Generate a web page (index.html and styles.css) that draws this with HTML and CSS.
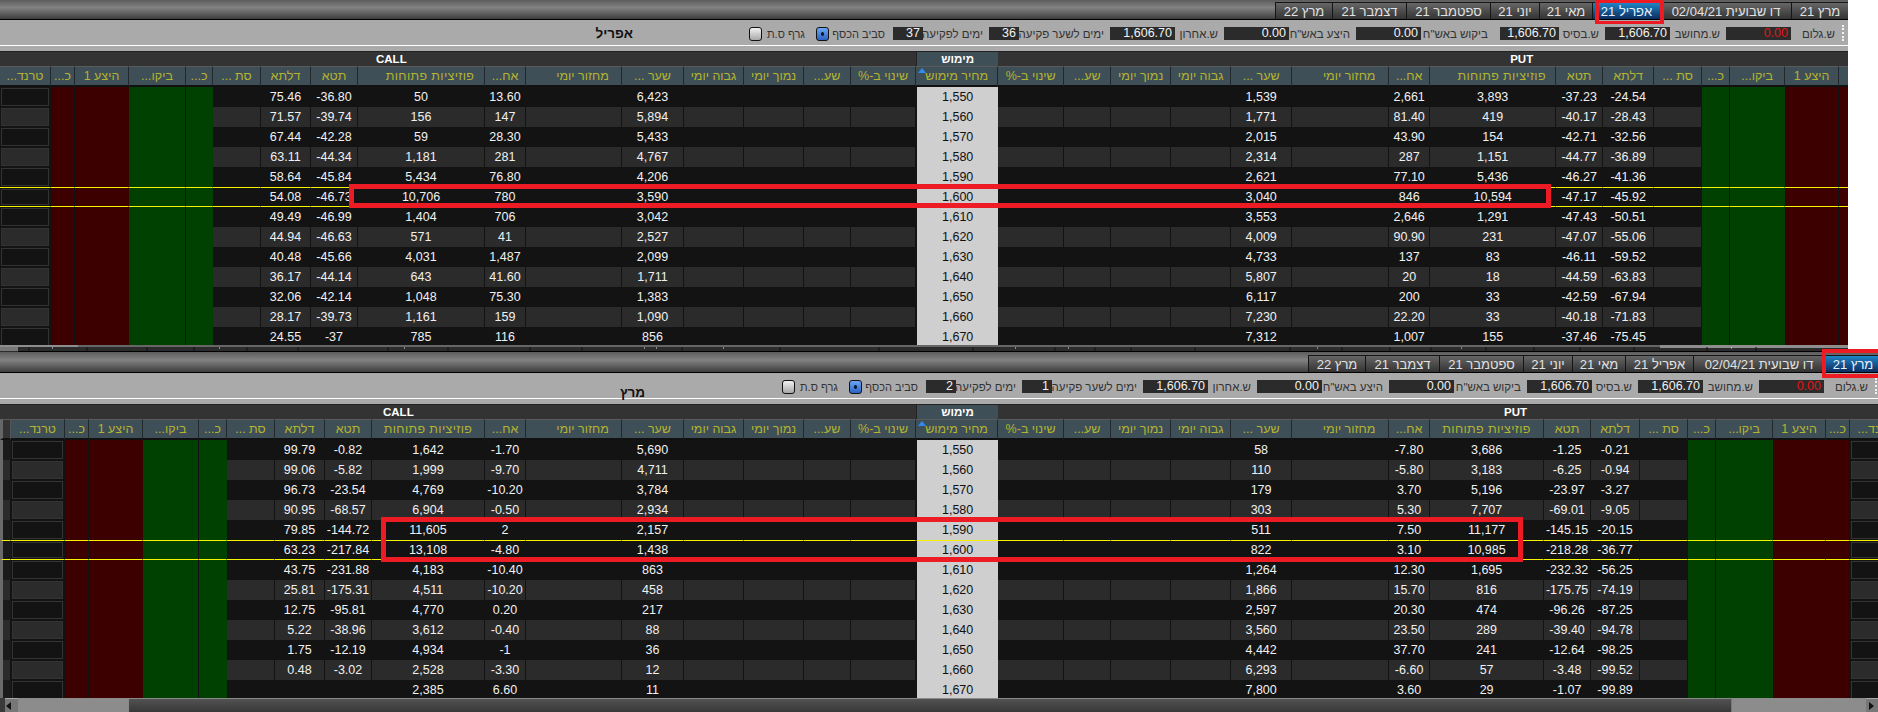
FILE: index.html
```html
<!DOCTYPE html>
<html lang="he">
<head>
<meta charset="utf-8">
<title>מסך אופציות</title>
<link rel="stylesheet" href="styles.css">
</head>
<body>
<div class="page">

<section class="panel panel-a">
  <nav class="bar">
    <span class="tab t57">מרץ 21</span><span class="tab t131">דו שבועית 02/04/21</span><span class="tab t68 active">אפריל 21</span><span class="tab t53">מאי 21</span><span class="tab t49">יוני 21</span><span class="tab t84">ספטמבר 21</span><span class="tab t74">דצמבר 21</span><span class="tab t57">מרץ 22</span>
  </nav>
  <div class="toolbar">
    <div class="tools">
      <i class="grip"></i>
      <div class="field f-gross"><label>ש.גלום</label><output class="neg">0.00</output></div>
      <div class="field f-calc"><label>ש.מחושב</label><output>1,606.70</output></div>
      <div class="field f-base"><label>ש.בסיס</label><output>1,606.70</output></div>
      <div class="field f-bid"><label>ביקוש באש"ח</label><output>0.00</output></div>
      <div class="field f-ask"><label>היצע באש"ח</label><output>0.00</output></div>
      <div class="field f-last"><label>ש.אחרון</label><output>1,606.70</output></div>
      <div class="field f-exd"><label>ימים לשער פקיעה</label><output class="short">36</output></div>
      <div class="field f-days"><label>ימים לפקיעה</label><output class="short">37</output></div>
      <div class="check c-money"><label>סביב הכסף</label><i class="box on"></i></div>
      <div class="check c-graph"><label>גרף ס.ת</label><i class="box"></i></div>
      <h2 class="title">אפריל</h2>
    </div>
  </div>
  <div class="grid">
    <table>
      <colgroup><col class="w51"><col class="w24"><col class="w54"><col class="w57"><col class="w27"><col class="w48"><col class="w50"><col class="w47"><col class="w127"><col class="w41"><col class="w96"><col class="w62"><col class="w60"><col class="w60"><col class="w47"><col class="w65"><col class="w82"><col class="w66"><col class="w47"><col class="w60"><col class="w60"><col class="w61"><col class="w97"><col class="w41"><col class="w126"><col class="w47"><col class="w51"><col class="w48"><col class="w28"><col class="w55"><col class="w54"><col class="w54"></colgroup>
      <thead>
        <tr class="groups"><th colspan="16" class="call">CALL</th><th class="exercise">מימוש</th><th colspan="15" class="put">PUT</th></tr>
        <tr class="heads"><th>טרנד...</th><th>כ...</th><th>היצע 1</th><th>ביקו...</th><th>כ...</th><th>סת ...</th><th>דלתא</th><th>תטא</th><th class="off wide">פוזיציות פתוחות</th><th>אח...</th><th class="off">מחזור יומי</th><th>שער ...</th><th>גבוה יומי</th><th>נמוך יומי</th><th>שע...</th><th>שינוי ב-%</th><th class="sorted">מחיר מימוש</th><th>שינוי ב-%</th><th>שע...</th><th>נמוך יומי</th><th>גבוה יומי</th><th>שער ...</th><th class="off">מחזור יומי</th><th>אח...</th><th class="off wide">פוזיציות פתוחות</th><th>תטא</th><th>דלתא</th><th>סת ...</th><th>כ...</th><th>ביקו...</th><th>היצע 1</th><th>כ...</th></tr>
      </thead>
      <tbody>
        <tr><td class="trend"></td><td class="r sep"></td><td class="r"></td><td class="g sep"></td><td class="g"></td><td></td><td>75.46</td><td>-36.80</td><td>50</td><td>13.60</td><td></td><td>6,423</td><td></td><td></td><td></td><td></td><td class="strike">1,550</td><td></td><td></td><td></td><td></td><td>1,539</td><td></td><td>2,661</td><td>3,893</td><td>-37.23</td><td>-24.54</td><td></td><td class="g sep"></td><td class="g"></td><td class="r sep"></td><td class="r"></td></tr>
        <tr class="alt"><td class="trend"></td><td class="r sep"></td><td class="r"></td><td class="g sep"></td><td class="g"></td><td></td><td>71.57</td><td>-39.74</td><td>156</td><td>147</td><td></td><td>5,894</td><td></td><td></td><td></td><td></td><td class="strike">1,560</td><td></td><td></td><td></td><td></td><td>1,771</td><td></td><td>81.40</td><td>419</td><td>-40.17</td><td>-28.43</td><td></td><td class="g sep"></td><td class="g"></td><td class="r sep"></td><td class="r"></td></tr>
        <tr><td class="trend"></td><td class="r sep"></td><td class="r"></td><td class="g sep"></td><td class="g"></td><td></td><td>67.44</td><td>-42.28</td><td>59</td><td>28.30</td><td></td><td>5,433</td><td></td><td></td><td></td><td></td><td class="strike">1,570</td><td></td><td></td><td></td><td></td><td>2,015</td><td></td><td>43.90</td><td>154</td><td>-42.71</td><td>-32.56</td><td></td><td class="g sep"></td><td class="g"></td><td class="r sep"></td><td class="r"></td></tr>
        <tr class="alt"><td class="trend"></td><td class="r sep"></td><td class="r"></td><td class="g sep"></td><td class="g"></td><td></td><td>63.11</td><td>-44.34</td><td>1,181</td><td>281</td><td></td><td>4,767</td><td></td><td></td><td></td><td></td><td class="strike">1,580</td><td></td><td></td><td></td><td></td><td>2,314</td><td></td><td>287</td><td>1,151</td><td>-44.77</td><td>-36.89</td><td></td><td class="g sep"></td><td class="g"></td><td class="r sep"></td><td class="r"></td></tr>
        <tr><td class="trend"></td><td class="r sep"></td><td class="r"></td><td class="g sep"></td><td class="g"></td><td></td><td>58.64</td><td>-45.84</td><td>5,434</td><td>76.80</td><td></td><td>4,206</td><td></td><td></td><td></td><td></td><td class="strike">1,590</td><td></td><td></td><td></td><td></td><td>2,621</td><td></td><td>77.10</td><td>5,436</td><td>-46.27</td><td>-41.36</td><td></td><td class="g sep"></td><td class="g"></td><td class="r sep"></td><td class="r"></td></tr>
        <tr class="atm"><td class="trend"></td><td class="r sep"></td><td class="r"></td><td class="g sep"></td><td class="g"></td><td></td><td>54.08</td><td>-46.73</td><td>10,706</td><td>780</td><td></td><td>3,590</td><td></td><td></td><td></td><td></td><td class="strike">1,600</td><td></td><td></td><td></td><td></td><td>3,040</td><td></td><td>846</td><td>10,594</td><td>-47.17</td><td>-45.92</td><td></td><td class="g sep"></td><td class="g"></td><td class="r sep"></td><td class="r"></td></tr>
        <tr><td class="trend"></td><td class="r sep"></td><td class="r"></td><td class="g sep"></td><td class="g"></td><td></td><td>49.49</td><td>-46.99</td><td>1,404</td><td>706</td><td></td><td>3,042</td><td></td><td></td><td></td><td></td><td class="strike">1,610</td><td></td><td></td><td></td><td></td><td>3,553</td><td></td><td>2,646</td><td>1,291</td><td>-47.43</td><td>-50.51</td><td></td><td class="g sep"></td><td class="g"></td><td class="r sep"></td><td class="r"></td></tr>
        <tr class="alt"><td class="trend"></td><td class="r sep"></td><td class="r"></td><td class="g sep"></td><td class="g"></td><td></td><td>44.94</td><td>-46.63</td><td>571</td><td>41</td><td></td><td>2,527</td><td></td><td></td><td></td><td></td><td class="strike">1,620</td><td></td><td></td><td></td><td></td><td>4,009</td><td></td><td>90.90</td><td>231</td><td>-47.07</td><td>-55.06</td><td></td><td class="g sep"></td><td class="g"></td><td class="r sep"></td><td class="r"></td></tr>
        <tr><td class="trend"></td><td class="r sep"></td><td class="r"></td><td class="g sep"></td><td class="g"></td><td></td><td>40.48</td><td>-45.66</td><td>4,031</td><td>1,487</td><td></td><td>2,099</td><td></td><td></td><td></td><td></td><td class="strike">1,630</td><td></td><td></td><td></td><td></td><td>4,733</td><td></td><td>137</td><td>83</td><td>-46.11</td><td>-59.52</td><td></td><td class="g sep"></td><td class="g"></td><td class="r sep"></td><td class="r"></td></tr>
        <tr class="alt"><td class="trend"></td><td class="r sep"></td><td class="r"></td><td class="g sep"></td><td class="g"></td><td></td><td>36.17</td><td>-44.14</td><td>643</td><td>41.60</td><td></td><td>1,711</td><td></td><td></td><td></td><td></td><td class="strike">1,640</td><td></td><td></td><td></td><td></td><td>5,807</td><td></td><td>20</td><td>18</td><td>-44.59</td><td>-63.83</td><td></td><td class="g sep"></td><td class="g"></td><td class="r sep"></td><td class="r"></td></tr>
        <tr><td class="trend"></td><td class="r sep"></td><td class="r"></td><td class="g sep"></td><td class="g"></td><td></td><td>32.06</td><td>-42.14</td><td>1,048</td><td>75.30</td><td></td><td>1,383</td><td></td><td></td><td></td><td></td><td class="strike">1,650</td><td></td><td></td><td></td><td></td><td>6,117</td><td></td><td>200</td><td>33</td><td>-42.59</td><td>-67.94</td><td></td><td class="g sep"></td><td class="g"></td><td class="r sep"></td><td class="r"></td></tr>
        <tr class="alt"><td class="trend"></td><td class="r sep"></td><td class="r"></td><td class="g sep"></td><td class="g"></td><td></td><td>28.17</td><td>-39.73</td><td>1,161</td><td>159</td><td></td><td>1,090</td><td></td><td></td><td></td><td></td><td class="strike">1,660</td><td></td><td></td><td></td><td></td><td>7,230</td><td></td><td>22.20</td><td>33</td><td>-40.18</td><td>-71.83</td><td></td><td class="g sep"></td><td class="g"></td><td class="r sep"></td><td class="r"></td></tr>
        <tr><td class="trend"></td><td class="r sep"></td><td class="r"></td><td class="g sep"></td><td class="g"></td><td></td><td>24.55</td><td>-37</td><td>785</td><td>116</td><td></td><td>856</td><td></td><td></td><td></td><td></td><td class="strike">1,670</td><td></td><td></td><td></td><td></td><td>7,312</td><td></td><td>1,007</td><td>155</td><td>-37.46</td><td>-75.45</td><td></td><td class="g sep"></td><td class="g"></td><td class="r sep"></td><td class="r"></td></tr>
      </tbody>
    </table>
  </div>
  <svg class="ruler" width="1848" height="7" viewBox="0 0 1848 7" aria-hidden="true">
    <rect width="1848" height="7" fill="#2c2c2c"/>
    <rect x="78" width="1582" height="2" fill="#666"/>
    <rect width="78" height="2" fill="#8e8e8e"/>
    <rect x="1660" width="188" height="3" fill="#8e8e8e"/>
    <rect y="2" width="18" height="4" fill="#777"/>
    <rect y="6" x="18" width="1830" height="1" fill="#000"/>
    <path d="M29 2v4M87 2v4M147 2v4M194 2v4M247 2v4M298 2v4M388 2v4M448 2v4M530 2v4M582 2v4M682 2v4M780 2v4M879 2v4M973 2v4M1055 2v4M1095 2v4M1131 2v4M1195 2v4M1290 2v4M1342 2v4M1390 2v4M1431 2v4M1486 2v4M1534 2v4M1580 2v4M1634 2v4M1707 2v4M1756 2v4" stroke="#111"/>
    <path d="M52 3h1M219 3h1M404 3h1M644 3h1M656 3h1M723 3h1M1015 3h1M1068 3h1M1317 3h1M1461 3h1M1731 3h1" stroke="#dfe6ff"/>
  </svg>
</section>

<section class="panel panel-b">
  <nav class="bar">
    <span class="tab t57 active">מרץ 21</span><span class="tab t131">דו שבועית 02/04/21</span><span class="tab t68">אפריל 21</span><span class="tab t53">מאי 21</span><span class="tab t49">יוני 21</span><span class="tab t84">ספטמבר 21</span><span class="tab t74">דצמבר 21</span><span class="tab t57">מרץ 22</span>
  </nav>
  <div class="toolbar">
    <div class="tools">
      <i class="grip"></i>
      <div class="field f-gross"><label>ש.גלום</label><output class="neg">0.00</output></div>
      <div class="field f-calc"><label>ש.מחושב</label><output>1,606.70</output></div>
      <div class="field f-base"><label>ש.בסיס</label><output>1,606.70</output></div>
      <div class="field f-bid"><label>ביקוש באש"ח</label><output>0.00</output></div>
      <div class="field f-ask"><label>היצע באש"ח</label><output>0.00</output></div>
      <div class="field f-last"><label>ש.אחרון</label><output>1,606.70</output></div>
      <div class="field f-exd"><label>ימים לשער פקיעה</label><output class="short">1</output></div>
      <div class="field f-days"><label>ימים לפקיעה</label><output class="short">2</output></div>
      <div class="check c-money"><label>סביב הכסף</label><i class="box on"></i></div>
      <div class="check c-graph"><label>גרף ס.ת</label><i class="box"></i></div>
      <h2 class="title">מרץ</h2>
    </div>
  </div>
  <div class="grid">
    <table>
      <colgroup><col class="w11"><col class="w54"><col class="w24"><col class="w54"><col class="w56"><col class="w28"><col class="w48"><col class="w50"><col class="w47"><col class="w113"><col class="w41"><col class="w96"><col class="w62"><col class="w60"><col class="w60"><col class="w47"><col class="w65"><col class="w82"><col class="w66"><col class="w47"><col class="w60"><col class="w60"><col class="w61"><col class="w97"><col class="w41"><col class="w114"><col class="w47"><col class="w49"><col class="w48"><col class="w28"><col class="w57"><col class="w53"><col class="w24"><col class="w53"></colgroup>
      <thead>
        <tr class="groups"><th colspan="17" class="call">CALL</th><th class="exercise">מימוש</th><th colspan="16" class="put">PUT</th></tr>
        <tr class="heads"><th class="gutter"></th><th>טרנד...</th><th>כ...</th><th>היצע 1</th><th>ביקו...</th><th>כ...</th><th>סת ...</th><th>דלתא</th><th>תטא</th><th class="wide">פוזיציות פתוחות</th><th>אח...</th><th class="off">מחזור יומי</th><th>שער ...</th><th>גבוה יומי</th><th>נמוך יומי</th><th>שע...</th><th>שינוי ב-%</th><th class="sorted">מחיר מימוש</th><th>שינוי ב-%</th><th>שע...</th><th>נמוך יומי</th><th>גבוה יומי</th><th>שער ...</th><th class="off">מחזור יומי</th><th>אח...</th><th class="wide">פוזיציות פתוחות</th><th>תטא</th><th>דלתא</th><th>סת ...</th><th>כ...</th><th>ביקו...</th><th>היצע 1</th><th>כ...</th><th>טרנד...</th></tr>
      </thead>
      <tbody>
        <tr><td class="gutter"></td><td class="trend"></td><td class="r sep"></td><td class="r"></td><td class="g sep"></td><td class="g"></td><td></td><td>99.79</td><td>-0.82</td><td>1,642</td><td>-1.70</td><td></td><td>5,690</td><td></td><td></td><td></td><td></td><td class="strike">1,550</td><td></td><td></td><td></td><td></td><td>58</td><td></td><td>-7.80</td><td>3,686</td><td>-1.25</td><td>-0.21</td><td></td><td class="g sep"></td><td class="g"></td><td class="r sep"></td><td class="r"></td><td class="trend"></td></tr>
        <tr class="alt"><td class="gutter"></td><td class="trend"></td><td class="r sep"></td><td class="r"></td><td class="g sep"></td><td class="g"></td><td></td><td>99.06</td><td>-5.82</td><td>1,999</td><td>-9.70</td><td></td><td>4,711</td><td></td><td></td><td></td><td></td><td class="strike">1,560</td><td></td><td></td><td></td><td></td><td>110</td><td></td><td>-5.80</td><td>3,183</td><td>-6.25</td><td>-0.94</td><td></td><td class="g sep"></td><td class="g"></td><td class="r sep"></td><td class="r"></td><td class="trend"></td></tr>
        <tr><td class="gutter"></td><td class="trend"></td><td class="r sep"></td><td class="r"></td><td class="g sep"></td><td class="g"></td><td></td><td>96.73</td><td>-23.54</td><td>4,769</td><td>-10.20</td><td></td><td>3,784</td><td></td><td></td><td></td><td></td><td class="strike">1,570</td><td></td><td></td><td></td><td></td><td>179</td><td></td><td>3.70</td><td>5,196</td><td>-23.97</td><td>-3.27</td><td></td><td class="g sep"></td><td class="g"></td><td class="r sep"></td><td class="r"></td><td class="trend"></td></tr>
        <tr class="alt"><td class="gutter"></td><td class="trend"></td><td class="r sep"></td><td class="r"></td><td class="g sep"></td><td class="g"></td><td></td><td>90.95</td><td>-68.57</td><td>6,904</td><td>-0.50</td><td></td><td>2,934</td><td></td><td></td><td></td><td></td><td class="strike">1,580</td><td></td><td></td><td></td><td></td><td>303</td><td></td><td>5.30</td><td>7,707</td><td>-69.01</td><td>-9.05</td><td></td><td class="g sep"></td><td class="g"></td><td class="r sep"></td><td class="r"></td><td class="trend"></td></tr>
        <tr><td class="gutter"></td><td class="trend"></td><td class="r sep"></td><td class="r"></td><td class="g sep"></td><td class="g"></td><td></td><td>79.85</td><td>-144.72</td><td>11,605</td><td>2</td><td></td><td>2,157</td><td></td><td></td><td></td><td></td><td class="strike">1,590</td><td></td><td></td><td></td><td></td><td>511</td><td></td><td>7.50</td><td>11,177</td><td>-145.15</td><td>-20.15</td><td></td><td class="g sep"></td><td class="g"></td><td class="r sep"></td><td class="r"></td><td class="trend"></td></tr>
        <tr class="atm"><td class="gutter"></td><td class="trend"></td><td class="r sep"></td><td class="r"></td><td class="g sep"></td><td class="g"></td><td></td><td>63.23</td><td>-217.84</td><td>13,108</td><td>-4.80</td><td></td><td>1,438</td><td></td><td></td><td></td><td></td><td class="strike">1,600</td><td></td><td></td><td></td><td></td><td>822</td><td></td><td>3.10</td><td>10,985</td><td>-218.28</td><td>-36.77</td><td></td><td class="g sep"></td><td class="g"></td><td class="r sep"></td><td class="r"></td><td class="trend"></td></tr>
        <tr><td class="gutter"></td><td class="trend"></td><td class="r sep"></td><td class="r"></td><td class="g sep"></td><td class="g"></td><td></td><td>43.75</td><td>-231.88</td><td>4,183</td><td>-10.40</td><td></td><td>863</td><td></td><td></td><td></td><td></td><td class="strike">1,610</td><td></td><td></td><td></td><td></td><td>1,264</td><td></td><td>12.30</td><td>1,695</td><td>-232.32</td><td>-56.25</td><td></td><td class="g sep"></td><td class="g"></td><td class="r sep"></td><td class="r"></td><td class="trend"></td></tr>
        <tr class="alt"><td class="gutter"></td><td class="trend"></td><td class="r sep"></td><td class="r"></td><td class="g sep"></td><td class="g"></td><td></td><td>25.81</td><td>-175.31</td><td>4,511</td><td>-10.20</td><td></td><td>458</td><td></td><td></td><td></td><td></td><td class="strike">1,620</td><td></td><td></td><td></td><td></td><td>1,866</td><td></td><td>15.70</td><td>816</td><td>-175.75</td><td>-74.19</td><td></td><td class="g sep"></td><td class="g"></td><td class="r sep"></td><td class="r"></td><td class="trend"></td></tr>
        <tr><td class="gutter"></td><td class="trend"></td><td class="r sep"></td><td class="r"></td><td class="g sep"></td><td class="g"></td><td></td><td>12.75</td><td>-95.81</td><td>4,770</td><td>0.20</td><td></td><td>217</td><td></td><td></td><td></td><td></td><td class="strike">1,630</td><td></td><td></td><td></td><td></td><td>2,597</td><td></td><td>20.30</td><td>474</td><td>-96.26</td><td>-87.25</td><td></td><td class="g sep"></td><td class="g"></td><td class="r sep"></td><td class="r"></td><td class="trend"></td></tr>
        <tr class="alt"><td class="gutter"></td><td class="trend"></td><td class="r sep"></td><td class="r"></td><td class="g sep"></td><td class="g"></td><td></td><td>5.22</td><td>-38.96</td><td>3,612</td><td>-0.40</td><td></td><td>88</td><td></td><td></td><td></td><td></td><td class="strike">1,640</td><td></td><td></td><td></td><td></td><td>3,560</td><td></td><td>23.50</td><td>289</td><td>-39.40</td><td>-94.78</td><td></td><td class="g sep"></td><td class="g"></td><td class="r sep"></td><td class="r"></td><td class="trend"></td></tr>
        <tr><td class="gutter"></td><td class="trend"></td><td class="r sep"></td><td class="r"></td><td class="g sep"></td><td class="g"></td><td></td><td>1.75</td><td>-12.19</td><td>4,934</td><td>-1</td><td></td><td>36</td><td></td><td></td><td></td><td></td><td class="strike">1,650</td><td></td><td></td><td></td><td></td><td>4,442</td><td></td><td>37.70</td><td>241</td><td>-12.64</td><td>-98.25</td><td></td><td class="g sep"></td><td class="g"></td><td class="r sep"></td><td class="r"></td><td class="trend"></td></tr>
        <tr class="alt"><td class="gutter"></td><td class="trend"></td><td class="r sep"></td><td class="r"></td><td class="g sep"></td><td class="g"></td><td></td><td>0.48</td><td>-3.02</td><td>2,528</td><td>-3.30</td><td></td><td>12</td><td></td><td></td><td></td><td></td><td class="strike">1,660</td><td></td><td></td><td></td><td></td><td>6,293</td><td></td><td>-6.60</td><td>57</td><td>-3.48</td><td>-99.52</td><td></td><td class="g sep"></td><td class="g"></td><td class="r sep"></td><td class="r"></td><td class="trend"></td></tr>
        <tr><td class="gutter"></td><td class="trend"></td><td class="r sep"></td><td class="r"></td><td class="g sep"></td><td class="g"></td><td></td><td></td><td></td><td>2,385</td><td>6.60</td><td></td><td>11</td><td></td><td></td><td></td><td></td><td class="strike">1,670</td><td></td><td></td><td></td><td></td><td>7,800</td><td></td><td>3.60</td><td>29</td><td>-1.07</td><td>-99.89</td><td></td><td class="g sep"></td><td class="g"></td><td class="r sep"></td><td class="r"></td><td class="trend"></td></tr>
      </tbody>
    </table>
  </div>
  <div class="hscroll">
    <span class="end"></span>
    <span class="arrow left"></span>
    <span class="track t-left"></span>
    <span class="thumb"></span>
    <span class="track t-right"></span>
    <span class="arrow right"></span>
  </div>
</section>

<div class="mark mark-tab-a"></div>
<div class="mark mark-tab-b"></div>
<div class="mark mark-row-a"></div>
<div class="mark mark-row-b"></div>

</div>
</body>
</html>
```

FILE: styles.css
```css
* { box-sizing: border-box; }
html, body { margin: 0; padding: 0; background: #fff; }
body { font-family: "Liberation Sans", "Noto Sans", sans-serif; font-size: 12.5px; overflow: hidden; }
.page { position: relative; width: 1878px; height: 712px; overflow: hidden; }
.panel { display: flex; flex-direction: column; overflow: hidden; }
.panel-a { width: 1848px; height: 352px; }
.panel-b { width: 1878px; height: 360px; }

/* tabs */
.bar { display: flex; direction: rtl; height: 20px; padding-top: 2px; border-bottom: 1px solid #000; background: linear-gradient(#5c5c5c, #828282 40%, #3e3e3e); }
.panel-b .bar { height: 21px; padding-top: 3px; margin-right: -3px; }
.tab { flex: none; display: flex; align-items: center; justify-content: center; height: 17px; color: #e2e2e2; font-size: 13px; border: 1px solid #151515; border-bottom: 0; border-right: 0; background: linear-gradient(#666, #333); }
.tab.active { color: #e8f2ff; background: linear-gradient(#1f84c6, #0b2d60); }
.t49 { width: 49px; } .t53 { width: 53px; } .t57 { width: 57px; } .t68 { width: 68px; } .t74 { width: 74px; } .t84 { width: 84px; } .t131 { width: 131px; }

/* toolbar */
.toolbar { background: #aaa; padding-bottom: 5px; }
.tools { display: flex; direction: rtl; align-items: flex-start; height: 26px; padding: 7px 4px 0 0; border-bottom: 1px solid #fff; }
.panel-b .tools { padding-right: 1px; }
.grip { flex: none; width: 3px; height: 16px; margin: -2px 0 0 6px; border-right: 2px dotted #f4f4f4; }
.field, .check { flex: none; display: flex; align-items: center; height: 13px; }
.field label, .check label { flex: none; color: #333; font-size: 11.5px; white-space: nowrap; }
.field output { flex: none; height: 13px; width: 65px; padding-right: 3px; background: #2b2b2b; color: #f2f2f2; direction: ltr; text-align: right; font-size: 12.5px; line-height: 13px; }
.field output.short { width: 30px; }
.field output.neg { color: #e01515; }
.field { margin-left: 6px; }
.f-gross label { width: 44px; }
.f-calc label { width: 50px; }
.f-base label { width: 40px; }
.f-bid label { width: 67px; }
.f-ask label { width: 61px; }
.f-last label { width: 43px; }
.f-exd label { width: 85px; }
.f-days label { width: 60px; }
.f-days { margin-left: 8px; }
.panel-a .f-base output { width: 59px; }
.panel-a .f-base { margin-left: 12px; }
.c-money { margin-left: 11px; }
.check label { font-size: 11px; }
.c-money label { width: 56px; }
.c-graph label { width: 43px; }
.box { flex: none; width: 13px; height: 14px; border: 1px solid #111; border-radius: 3px; background: linear-gradient(#f2f2f2, #a8a8a8); }
.box.on { background: radial-gradient(circle, #101830 0 1.5px, transparent 2px), linear-gradient(#6aa6f4, #2a62c4); }
.title { flex: none; margin: -1px 116px 0 0; color: #111; font-size: 13.5px; line-height: 16px; font-weight: bold; }
.panel-b .title { margin: 5px 137px 0 0; }

/* grid */
.grid { height: 294px; overflow: hidden; background: #131313; border-top: 1px solid #222; flex: none; }
table { table-layout: fixed; width: 0; border-collapse: separate; border-spacing: 0; }
th, td { padding: 0; overflow: hidden; white-space: nowrap; text-align: center; font-weight: normal; }
.groups th { height: 14px; line-height: 14px; background: #333; color: #fff; font-weight: bold; font-size: 11.5px; text-align: left; }
.groups th.exercise { background: #3f4f57; text-align: center; direction: rtl; border-left: 1px solid #222; }
.panel-a .call { padding-left: 376px; }
.panel-a .put { padding-left: 512px; }
.panel-b .call { padding-left: 383px; }
.panel-b .put { padding-left: 506px; }
.heads th { position: relative; height: 21px; background: #3f4f57; color: #b4b430; direction: rtl; font-size: 12.5px; line-height: 18px; border-top: 1px solid #5a5a5a; border-bottom: 2px solid #111; border-right: 1px solid #22282b; }
.heads th.off { padding-left: 18px; }
.heads th.wide { letter-spacing: .35px; }
.heads th.gutter { background: #333; border-left: 3px solid #666; border-right: 1px solid #555; }
.heads th.sorted::before { content: ""; position: absolute; left: 2px; top: 1px; border: 4px solid transparent; border-top: 0; border-bottom: 5px solid #2b8df2; }
tbody td { height: 20px; line-height: 20px; color: #f1f1f1; font-size: 12.5px; background: #131313; border-right: 1px solid transparent; }
tbody tr.alt td { background: #2b2b2b; border-right-color: #131313; }
tbody td.r, tbody tr.alt td.r { background: #3c0000; border-right-color: transparent; }
tbody td.g, tbody tr.alt td.g { background: #004000; border-right-color: transparent; }
tbody td.sep, tbody tr.alt td.sep { border-right-color: #131313; }
tbody td.strike, tbody tr.alt td.strike { background: #cfcfcf; color: #111; border-left: 1px solid #131313; border-right: 0; }
tbody td.trend { box-shadow: inset 0 0 0 1px #131313, inset 0 0 0 2px #333; }
tbody td.gutter { background: #1a1a1a; border-left: 3px solid #6a6a6a; }
tbody tr.alt td.gutter { background: #2b2b2b; }
tbody tr.atm td { border-top: 1px solid #f5f500; border-bottom: 1px solid #f5f500; line-height: 18px; }

.w11 { width: 11px; } .w24 { width: 24px; } .w27 { width: 27px; } .w28 { width: 28px; } .w41 { width: 41px; } .w47 { width: 47px; } .w48 { width: 48px; } .w49 { width: 49px; } .w50 { width: 50px; } .w51 { width: 51px; } .w53 { width: 53px; } .w54 { width: 54px; } .w55 { width: 55px; } .w56 { width: 56px; } .w57 { width: 57px; } .w60 { width: 60px; } .w61 { width: 61px; } .w62 { width: 62px; } .w65 { width: 65px; } .w66 { width: 66px; } .w82 { width: 82px; } .w96 { width: 96px; } .w97 { width: 97px; } .w113 { width: 113px; } .w114 { width: 114px; } .w126 { width: 126px; } .w127 { width: 127px; }

/* ruler under the first grid */
.ruler { display: block; flex: none; }

/* bottom scrollbar */
.hscroll { display: flex; height: 14px; background: #8c8c8c; flex: none; }
.end { width: 5px; background: #3a3a3a; }
.arrow { position: relative; width: 13px; background: #777; border-top: 1px solid #aaa; }
.arrow.right { width: 12px; }
.arrow::after { content: ""; position: absolute; top: 3px; border: 4px solid transparent; }
.arrow.left::after { left: 1px; border-right: 5px solid #111; border-left: 0; }
.arrow.right::after { left: 3px; border-left: 5px solid #111; border-right: 0; }
.track { background: #8c8c8c; }
.t-left { width: 110px; }
.t-right { width: 134px; }
.thumb { width: 1604px; background: linear-gradient(#525252, #383838); border: 1px solid #8a8a8a; border-right-color: #777; border-bottom: 0; }

/* red annotation frames */
.mark { position: absolute; border: 5px solid #ed1c24; pointer-events: none; }
.mark-tab-a { left: 1595px; top: 0; width: 69px; height: 24px; border-width: 3px 4px; }
.mark-tab-b { left: 1822px; top: 349px; width: 70px; height: 29px; border-width: 4px; }
.mark-row-a { left: 349px; top: 184px; width: 1202px; height: 24px; }
.mark-row-b { left: 381px; top: 517px; width: 1142px; height: 45px; }
```
